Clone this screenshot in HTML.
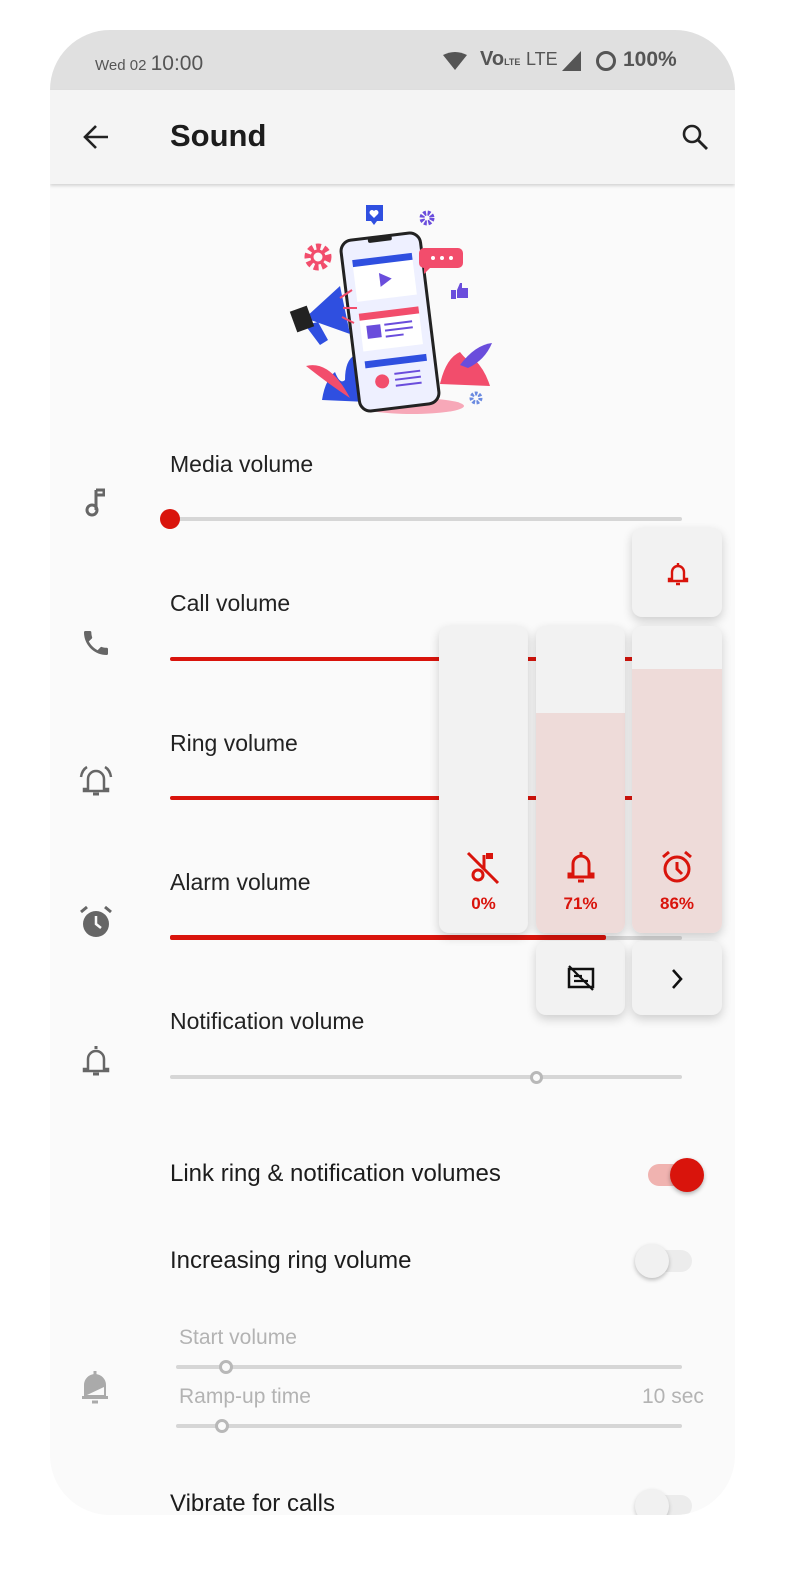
<!DOCTYPE html>
<html><head><meta charset="utf-8"><style>
*{margin:0;padding:0;box-sizing:border-box}
body{width:800px;height:1593px;background:#fff;position:relative;overflow:hidden;font-family:"Liberation Sans",sans-serif}
.phone{position:absolute;left:50px;top:30px;width:685px;height:1485px;border-radius:60px;overflow:hidden;background:#fafafa}
.sb{position:absolute;left:0;top:0;width:685px;height:60px;background:#e0e0e0}
.ab{position:absolute;left:0;top:60px;width:685px;height:94px;background:#f4f4f4;box-shadow:0 2px 3px rgba(0,0,0,.15)}
.abs{position:absolute}
.t{position:absolute;font-size:23px;color:#222}
.trk{position:absolute;height:4px;border-radius:2px;background:#d6d6d6}
.red{position:absolute;height:4px;border-radius:2px;background:#d9140c}
.card{position:absolute;background:#f2f2f2;border-radius:10px;box-shadow:0 4px 10px rgba(0,0,0,.18);overflow:hidden}
.pct{position:absolute;width:100%;text-align:center;font-weight:bold;color:#d9140c;font-size:17px;top:268px}
.b{position:absolute;font-size:24px;color:#1c1c1c}
.g{position:absolute;font-size:21px;color:#b3b3b3}
</style></head><body>
<div class="phone">
 <div class="sb">
  <div class="abs" style="left:45px;top:22px;font-size:15px;color:#555">Wed 02 <span style="font-size:21px">10:00</span></div>
  <svg class="abs" style="left:392px;top:22px" width="26" height="18"><path d="M1 3Q13 -3 25 3L13 18Z" fill="#555"/></svg>
  <div class="abs" style="left:430px;top:18px;font-size:20px;font-weight:bold;color:#555">Vo<span style="font-size:9px">LTE</span> <span style="font-weight:normal;font-size:18px">LTE</span></div>
  <svg class="abs" style="left:512px;top:21px" width="20" height="20"><path d="M19 0V20H0Z" fill="#555"/></svg>
  <svg class="abs" style="left:545px;top:20px" width="22" height="22"><circle cx="11" cy="11" r="8.5" stroke="#555" stroke-width="3" fill="none"/></svg>
  <div class="abs" style="left:573px;top:18px;font-size:21px;font-weight:bold;color:#555">100%</div>
 </div>
 <div class="ab">
  <svg class="abs" style="left:32px;top:34px" width="28" height="26"><path d="M26 13H3M14 2L3 13L14 24" stroke="#222" stroke-width="2.6" fill="none"/></svg>
  <div class="abs" style="left:120px;top:28px;font-size:31px;font-weight:bold;color:#1c1c1c">Sound</div>
  <svg class="abs" style="left:630px;top:32px" width="30" height="30"><circle cx="12" cy="12" r="8" stroke="#222" stroke-width="2.6" fill="none"/><path d="M18 18L27 27" stroke="#222" stroke-width="2.8"/></svg>
 </div>
 <!-- volume rows -->
 <div class="t" style="left:120px;top:421px">Media volume</div>
 <svg class="abs" style="left:35px;top:458px" width="20" height="30"><path d="M11 2V22M11 2H19V7H11" stroke="#666" stroke-width="3" fill="none"/><circle cx="7" cy="22" r="5" stroke="#666" stroke-width="3" fill="none"/></svg>
 <div class="trk" style="left:120px;top:487px;width:512px"></div>
 <div class="abs" style="left:110px;top:479px;width:20px;height:20px;border-radius:50%;background:#d9140c"></div>
 <div class="t" style="left:120px;top:560px">Call volume</div>
 <svg class="abs" style="left:30px;top:597px" width="32" height="32" viewBox="0 0 24 24"><path d="M6.6 10.8c1.4 2.8 3.8 5.1 6.6 6.6l2.2-2.2c.3-.3.7-.4 1-.2 1.1.4 2.3.6 3.6.6.6 0 1 .4 1 1V20c0 .6-.4 1-1 1C10.6 21 3 13.4 3 4c0-.6.4-1 1-1h3.5c.6 0 1 .4 1 1 0 1.3.2 2.5.6 3.6.1.3 0 .7-.2 1z" fill="#666"/></svg>
 <div class="red" style="left:120px;top:627px;width:470px"></div>
 <div class="t" style="left:120px;top:700px">Ring volume</div>
 <svg class="abs" style="left:26px;top:733px" width="40" height="36" viewBox="0 0 40 36"><path d="M12 26V16a8 8 0 0 1 16 0V26H32V28H8V26Z" stroke="#666" stroke-width="2.5" fill="none"/><path d="M17 31h6" stroke="#666" stroke-width="3"/><path d="M5 14Q6 7 11 4M35 14Q34 7 29 4" stroke="#666" stroke-width="2.5" fill="none"/></svg>
 <div class="red" style="left:120px;top:766px;width:470px"></div>
 <div class="t" style="left:120px;top:839px">Alarm volume</div>
 <svg class="abs" style="left:28px;top:874px" width="36" height="36" viewBox="0 0 36 36"><circle cx="18" cy="20" r="13" fill="#666"/><path d="M18 12V20L23 24" stroke="#fafafa" stroke-width="2.5" fill="none"/><path d="M3 8L9 3M33 8L27 3" stroke="#666" stroke-width="3"/></svg>
 <div class="trk" style="left:120px;top:906px;width:512px"></div>
 <div class="red" style="left:120px;top:905px;width:436px;height:5px"></div>
 <div class="t" style="left:120px;top:978px">Notification volume</div>
 <svg class="abs" style="left:30px;top:1013px" width="32" height="36" viewBox="0 0 32 36"><path d="M8 26V16a8 8 0 0 1 16 0V26H28V28H4V26Z" stroke="#666" stroke-width="2.5" fill="none"/><path d="M13 31h6M16 6V3" stroke="#666" stroke-width="3"/></svg>
 <div class="trk" style="left:120px;top:1045px;width:512px"></div>
 <div class="abs" style="left:480px;top:1041px;width:13px;height:13px;border-radius:50%;border:3px solid #b8b8b8;background:#fafafa"></div>
 <!-- toggles -->
 <div class="b" style="left:120px;top:1130px">Link ring &amp; notification volumes</div>
 <div class="abs" style="left:598px;top:1134px;width:46px;height:22px;border-radius:11px;background:#f0b3b0"></div>
 <div class="abs" style="left:620px;top:1128px;width:34px;height:34px;border-radius:50%;background:#d9140c;box-shadow:0 2px 4px rgba(0,0,0,.3)"></div>
 <div class="b" style="left:120px;top:1217px">Increasing ring volume</div>
 <div class="abs" style="left:598px;top:1220px;width:44px;height:22px;border-radius:11px;background:#ececec"></div>
 <div class="abs" style="left:585px;top:1214px;width:34px;height:34px;border-radius:50%;background:#f1f1f1;box-shadow:0 2px 4px rgba(0,0,0,.25)"></div>
 <div class="g" style="left:129px;top:1296px">Start volume</div>
 <div class="trk" style="left:126px;top:1335px;width:506px"></div>
 <div class="abs" style="left:169px;top:1330px;width:14px;height:14px;border-radius:50%;border:3px solid #b8b8b8;background:#fafafa"></div>
 <svg class="abs" style="left:30px;top:1335px" width="30" height="40" viewBox="0 0 30 40"><path d="M4 31V20a11 11 0 0 1 22 0V31H28V34H2V31Z" fill="#aaa"/><path d="M15 6V10M12 37h6" stroke="#aaa" stroke-width="3"/><path d="M7 30L24 22V30Z" fill="#fafafa"/></svg>
 <div class="g" style="left:129px;top:1355px">Ramp-up time</div>
 <div class="g" style="left:592px;top:1355px">10 sec</div>
 <div class="trk" style="left:126px;top:1394px;width:506px"></div>
 <div class="abs" style="left:165px;top:1389px;width:14px;height:14px;border-radius:50%;border:3px solid #b8b8b8;background:#fafafa"></div>
 <div class="b" style="left:120px;top:1460px">Vibrate for calls</div>
 <div class="abs" style="left:598px;top:1465px;width:44px;height:22px;border-radius:11px;background:#ececec"></div>
 <div class="abs" style="left:585px;top:1459px;width:34px;height:34px;border-radius:50%;background:#f1f1f1;box-shadow:0 2px 4px rgba(0,0,0,.2)"></div>
</div>
<!-- illustration in page coords -->
<svg class="abs" style="left:0;top:0" width="800" height="450" viewBox="0 0 800 450">
 <ellipse cx="412" cy="406" rx="52" ry="8" fill="#f7a8b8"/>
 <path d="M322 400Q325 380 335 372Q340 385 345 380Q345 360 355 355Q360 375 365 370L368 402Z" fill="#2f4fe0"/>
 <path d="M306 366Q330 360 350 398Q330 385 306 366Z" fill="#f24d6c"/>
 <path d="M440 384Q446 358 460 352Q470 365 475 360Q485 370 490 386Z" fill="#f24d6c"/>
 <path d="M460 365Q475 345 492 343Q485 360 468 368Z" fill="#6a4ddc"/>
 <g transform="rotate(-7 390 322)">
  <rect x="350" y="236" width="80" height="172" rx="11" fill="#eef0ff" stroke="#222" stroke-width="3"/>
  <rect x="378" y="236" width="24" height="5" rx="2" fill="#222"/>
  <rect x="360" y="256" width="60" height="42" fill="#fff"/>
  <rect x="360" y="256" width="60" height="7" fill="#2f4fe0"/>
  <path d="M385 272L397 279L385 286Z" fill="#6a4ddc"/>
  <rect x="360" y="310" width="60" height="38" fill="#fff"/>
  <rect x="360" y="310" width="60" height="7" fill="#f24d6c"/>
  <rect x="366" y="323" width="14" height="13" fill="#6a4ddc"/>
  <path d="M384 324h28M384 330h28M384 336h18" stroke="#6a4ddc" stroke-width="2"/>
  <rect x="360" y="358" width="62" height="7" fill="#2f4fe0"/>
  <circle cx="375" cy="380" r="7" fill="#f24d6c"/>
  <path d="M388 374h26M388 380h26M388 386h26" stroke="#6a4ddc" stroke-width="2"/>
 </g>
 <path d="M305 318L340 286L350 334Z" fill="#2f4fe0"/>
 <path d="M305 325L320 345L328 340L318 322Z" fill="#2f4fe0"/>
 <rect x="293" y="308" width="18" height="22" fill="#222" transform="rotate(-20 302 319)"/>
 <path d="M340 298l12-8M343 308l14 0M342 317l12 6" stroke="#f24d6c" stroke-width="2"/>
 <circle cx="318" cy="257" r="10" fill="none" stroke="#f24d6c" stroke-width="7" stroke-dasharray="4.5 3"/>
 <circle cx="318" cy="257" r="6" fill="none" stroke="#f24d6c" stroke-width="3"/>
 <path d="M366 205h17v16h-6l-3 4l-3-4h-5Z" fill="#2f4fe0"/>
 <path d="M374 218l-4-4a2.4 2.4 0 0 1 4-3a2.4 2.4 0 0 1 4 3Z" fill="#fff"/>
 <circle cx="427" cy="218" r="5" fill="none" stroke="#6a4ddc" stroke-width="5" stroke-dasharray="2.5 1.5"/>
 <path d="M424 248h34a5 5 0 0 1 5 5v10a5 5 0 0 1-5 5h-28l-6 6v-6a5 5 0 0 1-5-5v-10a5 5 0 0 1 5-5Z" fill="#f24d6c"/>
 <circle cx="433" cy="258" r="2" fill="#fff"/><circle cx="442" cy="258" r="2" fill="#fff"/><circle cx="451" cy="258" r="2" fill="#fff"/>
 <path d="M451 290h5v9h-5ZM457 290l3-7h2v5h6v10h-11Z" fill="#6a4ddc"/>
 <circle cx="476" cy="398" r="4.5" fill="none" stroke="#6a8ae0" stroke-width="4" stroke-dasharray="2.5 1.5"/>
</svg>
<!-- volume panel -->
<div class="card" style="left:632px;top:528px;width:90px;height:89px">
 <svg class="abs" style="left:35px;top:33px" width="22" height="26" viewBox="0 0 22 26"><path d="M5 18V11a6 6 0 0 1 12 0V18H20V20H2V18Z" stroke="#d9140c" stroke-width="2.4" fill="none"/><path d="M9 23h4M11 4V2" stroke="#d9140c" stroke-width="2.4"/></svg>
</div>
<div class="card" style="left:439px;top:626px;width:89px;height:307px">
 <svg class="abs" style="left:27px;top:225px" width="34" height="34" viewBox="0 0 34 34"><circle cx="12" cy="24" r="5" stroke="#d9140c" stroke-width="3" fill="none"/><rect x="20" y="2" width="7" height="6" fill="#d9140c"/><path d="M18 4V18M2 2L32 32" stroke="#d9140c" stroke-width="3"/></svg>
 <div class="pct">0%</div>
</div>
<div class="card" style="left:536px;top:626px;width:89px;height:307px">
 <div class="abs" style="left:0;top:87px;width:100%;height:220px;background:#eedbd9"></div>
 <svg class="abs" style="left:30px;top:224px" width="30" height="34" viewBox="0 0 30 34"><path d="M7 24V14a8 8 0 0 1 16 0V24H27V27H3V24Z" stroke="#d9140c" stroke-width="3" fill="none"/><path d="M12 31h6M15 5V2" stroke="#d9140c" stroke-width="3"/></svg>
 <div class="pct">71%</div>
</div>
<div class="card" style="left:632px;top:626px;width:90px;height:307px">
 <div class="abs" style="left:0;top:43px;width:100%;height:264px;background:#eedbd9"></div>
 <svg class="abs" style="left:28px;top:224px" width="34" height="34" viewBox="0 0 34 34"><circle cx="17" cy="19" r="12" stroke="#d9140c" stroke-width="3" fill="none"/><path d="M17 12V19L22 24M3 7L9 2M31 7L25 2" stroke="#d9140c" stroke-width="3" fill="none"/></svg>
 <div class="pct">86%</div>
</div>
<div class="card" style="left:536px;top:941px;width:89px;height:74px">
 <svg class="abs" style="left:31px;top:24px" width="28" height="26" viewBox="0 0 28 26"><rect x="2" y="4" width="24" height="18" stroke="#111" stroke-width="2.5" fill="none"/><path d="M7 11h8M7 16h14M2 1L26 25" stroke="#111" stroke-width="2.2"/></svg>
</div>
<div class="card" style="left:632px;top:941px;width:90px;height:74px">
 <svg class="abs" style="left:38px;top:27px" width="14" height="22"><path d="M3 2L11 11L3 20" stroke="#111" stroke-width="2.6" fill="none"/></svg>
</div>
</body></html>
